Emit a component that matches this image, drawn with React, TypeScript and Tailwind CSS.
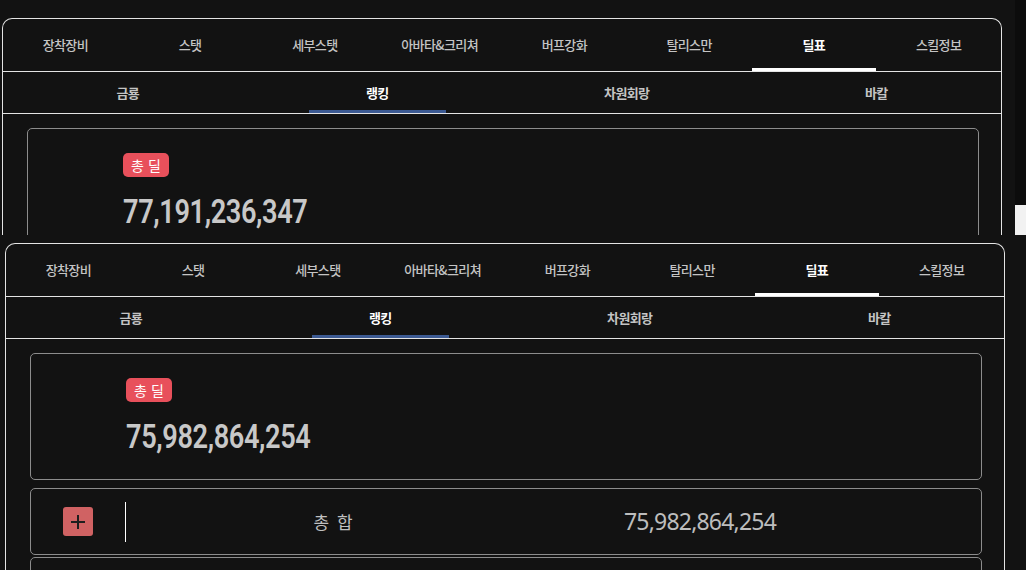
import React from "react";

const tabs1 = ["장착장비", "스탯", "세부스탯", "아바타&크리쳐", "버프강화", "탈리스만", "딜표", "스킬정보"];
const tabs2 = ["금룡", "랭킹", "차원회랑", "바칼"];

const kr = { fontFamily: '"Noto Sans CJK KR", "Noto Sans", sans-serif' };

function Panel({ total, withSum }: { total: string; withSum?: boolean }) {
  return (
    <div className="w-[1000px] border border-b-0 border-[#e4e4e4] rounded-t-[10px] bg-[#121212]" style={kr}>
      <div className="flex h-[53px] border-b border-[#e4e4e4]">
        {tabs1.map((t, i) => (
          <div key={t} className="flex-1 flex flex-col">
            <div
              className={
                i === 6
                  ? "flex-1 flex items-center justify-center pt-[3px] text-[13px] tracking-[-0.6px] text-white font-bold"
                  : "flex-1 flex items-center justify-center pt-[3px] text-[13px] tracking-[-0.6px] text-[#c4c4c4] font-medium"
              }
            >
              {t}
            </div>
            <div className={i === 6 ? "h-[3px] bg-white" : "h-[3px]"} />
          </div>
        ))}
      </div>
      <div className="flex h-[42px] border-b border-[#e4e4e4]">
        {tabs2.map((t, i) => (
          <div key={t} className="flex-1 flex flex-col">
            <div
              className={
                i === 1
                  ? "flex-1 flex items-center justify-center pt-[4px] text-[13px] tracking-[-0.6px] text-white font-bold"
                  : "flex-1 flex items-center justify-center pt-[4px] text-[13px] tracking-[-0.6px] text-[#c4c4c4] font-bold"
              }
            >
              {t}
            </div>
            <div className={i === 1 ? "h-[3px] w-[137px] mx-auto bg-[#3c5a93]" : "h-[3px]"} />
          </div>
        ))}
      </div>
      <div className="pl-[24px] pt-[14px]">
        <div className="w-[952px] h-[127px] border border-[#8c8c8c] rounded-[5px] pl-[95px] pt-[23px]">
          <div className="inline-flex items-center h-[24px] px-[8px] rounded-[5px] bg-[#e8505b] text-white text-[14px] leading-[24px] tracking-[0.5px]">
            총 딜
          </div>
          <div
            className="mt-[17px] h-[34px] text-[34px] leading-[34px] font-semibold text-[#c8c8c8] origin-left scale-x-[0.8] tracking-[-0.5px]"
            style={{ fontFamily: "Roboto, sans-serif" }}
          >
            {total}
          </div>
        </div>
        {withSum && (
          <>
            <div className="mt-[8px] w-[952px] h-[67px] border border-[#8c8c8c] rounded-[5px] flex items-center">
              <div className="w-[94px] flex justify-center">
                <div className="w-[30px] h-[29px] rounded-[3px] bg-[#d06263] flex items-center justify-center">
                  <svg width="18" height="18" viewBox="0 0 18 18">
                    <line x1="9" y1="2" x2="9" y2="16" stroke="#1e1e1e" strokeWidth="2" />
                    <line x1="2" y1="9" x2="16" y2="9" stroke="#1e1e1e" strokeWidth="2" />
                  </svg>
                </div>
              </div>
              <div className="w-px h-[40px] bg-white" />
              <div className="w-[416px] text-center text-[17px] text-[#c0c0c0] tracking-[2px]">총 합</div>
              <div
                className="w-[316px] text-center text-[23px] text-[#bdbdbd] tracking-[-0.8px]"
                style={{ fontFamily: '"Noto Sans", sans-serif' }}
              >
                {total}
              </div>
            </div>
            <div className="mt-[2px] w-[952px] h-[40px] border border-[#8c8c8c] rounded-[5px]" />
          </>
        )}
      </div>
    </div>
  );
}

export default function App() {
  return (
    <div className="w-[1026px] h-[570px] overflow-hidden bg-[#121212]">
      <div className="flex h-[235px] overflow-hidden">
        <div className="w-[1015px] pl-[2px] pt-[18px] bg-[#121212]">
          <Panel total="77,191,236,347" />
        </div>
        <div className="w-[11px] flex flex-col">
          <div className="flex-1 bg-[#0c0c0c]" />
          <div className="h-[30px] bg-[#f2f2f2]" />
        </div>
      </div>
      <div className="h-[335px] overflow-hidden pl-[5px] pt-[8px] bg-[#121212]">
        <Panel total="75,982,864,254" withSum />
      </div>
    </div>
  );
}
